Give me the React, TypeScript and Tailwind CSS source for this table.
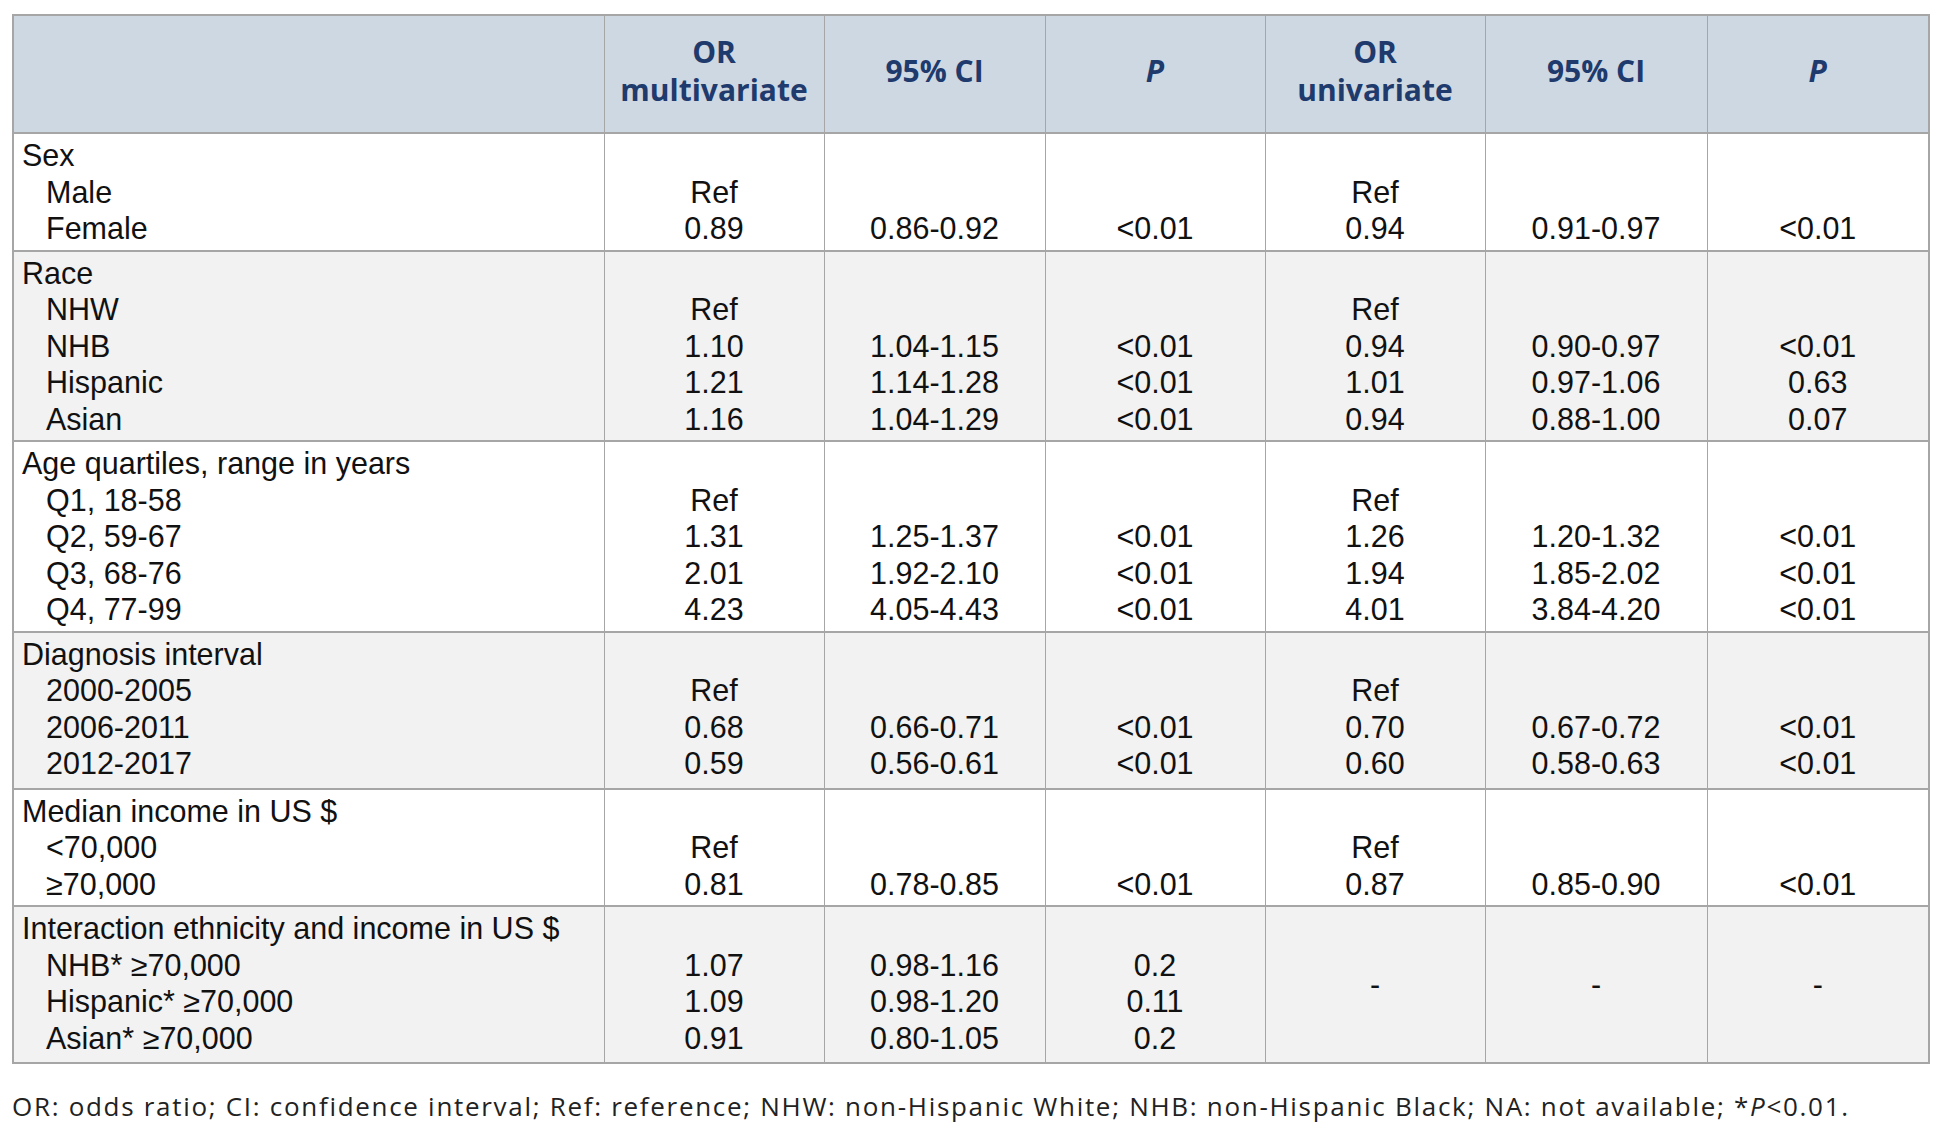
import React from 'react';

type Group = {
  label: string;
  rows: { name: string; cells: string[] }[];
  dashes?: boolean;
};

const groups: Group[] = [
  {
    label: 'Sex',
    rows: [
      { name: 'Male', cells: ['Ref', '', '', 'Ref', '', ''] },
      { name: 'Female', cells: ['0.89', '0.86-0.92', '<0.01', '0.94', '0.91-0.97', '<0.01'] },
    ],
  },
  {
    label: 'Race',
    rows: [
      { name: 'NHW', cells: ['Ref', '', '', 'Ref', '', ''] },
      { name: 'NHB', cells: ['1.10', '1.04-1.15', '<0.01', '0.94', '0.90-0.97', '<0.01'] },
      { name: 'Hispanic', cells: ['1.21', '1.14-1.28', '<0.01', '1.01', '0.97-1.06', '0.63'] },
      { name: 'Asian', cells: ['1.16', '1.04-1.29', '<0.01', '0.94', '0.88-1.00', '0.07'] },
    ],
  },
  {
    label: 'Age quartiles, range in years',
    rows: [
      { name: 'Q1, 18-58', cells: ['Ref', '', '', 'Ref', '', ''] },
      { name: 'Q2, 59-67', cells: ['1.31', '1.25-1.37', '<0.01', '1.26', '1.20-1.32', '<0.01'] },
      { name: 'Q3, 68-76', cells: ['2.01', '1.92-2.10', '<0.01', '1.94', '1.85-2.02', '<0.01'] },
      { name: 'Q4, 77-99', cells: ['4.23', '4.05-4.43', '<0.01', '4.01', '3.84-4.20', '<0.01'] },
    ],
  },
  {
    label: 'Diagnosis interval',
    rows: [
      { name: '2000-2005', cells: ['Ref', '', '', 'Ref', '', ''] },
      { name: '2006-2011', cells: ['0.68', '0.66-0.71', '<0.01', '0.70', '0.67-0.72', '<0.01'] },
      { name: '2012-2017', cells: ['0.59', '0.56-0.61', '<0.01', '0.60', '0.58-0.63', '<0.01'] },
    ],
  },
  {
    label: 'Median income in US $',
    rows: [
      { name: '<70,000', cells: ['Ref', '', '', 'Ref', '', ''] },
      { name: '≥70,000', cells: ['0.81', '0.78-0.85', '<0.01', '0.87', '0.85-0.90', '<0.01'] },
    ],
  },
  {
    label: 'Interaction ethnicity and income in US $',
    dashes: true,
    rows: [
      { name: 'NHB* ≥70,000', cells: ['1.07', '0.98-1.16', '0.2'] },
      { name: 'Hispanic* ≥70,000', cells: ['1.09', '0.98-1.20', '0.11'] },
      { name: 'Asian* ≥70,000', cells: ['0.91', '0.80-1.05', '0.2'] },
    ],
  },
];

const line = 'h-[36.5px] leading-[36.5px] whitespace-nowrap';

export default function App() {
  return (
    <div className="min-h-[1139px] w-[1941px] bg-white pt-[14px] pl-[12px] font-['Liberation_Sans',Arial,sans-serif] text-[#111]">
      <table className="w-[1916px] table-fixed border-collapse border-2 border-[#a6a6a6]">
        <colgroup>
          <col className="w-[591px]" />
          <col className="w-[220px]" />
          <col className="w-[221px]" />
          <col className="w-[220px]" />
          <col className="w-[220px]" />
          <col className="w-[222px]" />
          <col className="w-[222px]" />
        </colgroup>
        <thead>
          <tr className="h-[118px] border-b-2 border-[#a6a6a6] bg-[#cdd8e2] font-['Open_Sans',sans-serif] text-[30px] font-extrabold leading-[38px] text-[#1f3a6c]">
            <th className="border-x border-[#a6a6a6]" />
            <th className="border-x border-[#a6a6a6] pb-[6px]">OR<br />multivariate</th>
            <th className="border-x border-[#a6a6a6] pb-[6px]">95% CI</th>
            <th className="border-x border-[#a6a6a6] pb-[6px] italic">P</th>
            <th className="border-x border-[#a6a6a6] pb-[6px]">OR<br />univariate</th>
            <th className="border-x border-[#a6a6a6] pb-[6px]">95% CI</th>
            <th className="border-x border-[#a6a6a6] pb-[6px] italic">P</th>
          </tr>
        </thead>
        <tbody className="text-[30.5px]">
          {groups.map((g, gi) => {
            // groups of four lines sit a little looser in the source
            const pad = g.rows.length === 3 ? 'pt-[3px] pb-[6px]' : 'py-[3px]';
            return (
              <tr
                key={g.label}
                className={`border-b-2 border-[#a6a6a6] align-top ${gi % 2 === 1 ? 'bg-[#f2f2f2]' : 'bg-white'}`}
              >
                <td className={`border-x border-[#a6a6a6] pl-[8px] ${pad}`}>
                  <div className={line}>{g.label}</div>
                  {g.rows.map(r => (
                    <div key={r.name} className={`${line} pl-[24px]`}>{r.name}</div>
                  ))}
                </td>
                {[0, 1, 2, 3, 4, 5].map(ci =>
                  g.dashes && ci >= 3 ? (
                    <td key={ci} className="border-x border-[#a6a6a6] text-center align-middle">-</td>
                  ) : (
                    <td key={ci} className={`border-x border-[#a6a6a6] text-center ${pad}`}>
                      <div className={line} />
                      {g.rows.map(r => (
                        <div key={r.name} className={line}>{r.cells[ci]}</div>
                      ))}
                    </td>
                  )
                )}
              </tr>
            );
          })}
        </tbody>
      </table>
      <p className="mt-[23px] font-['Open_Sans',sans-serif] text-[26px] tracking-[1.7px] text-[#222]">
        OR: odds ratio; CI: confidence interval; Ref: reference; NHW: non-Hispanic White; NHB: non-Hispanic Black; NA: not available; *<span className="italic">P</span>&lt;0.01.
      </p>
    </div>
  );
}
